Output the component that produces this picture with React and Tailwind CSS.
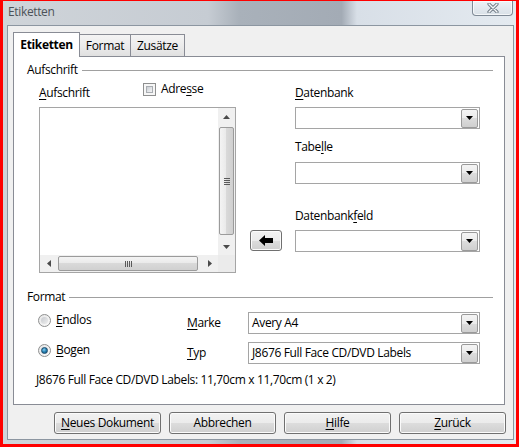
import React from "react";

const U = ({ children }) => (
  <span className="underline decoration-1 underline-offset-[2px]">{children}</span>
);

function DropBtn() {
  return (
    <div className="w-[17px] h-[19px] my-[1px] mr-[1px] border border-[#9a9a9a] rounded-[2px] bg-[linear-gradient(#f4f4f4_0%,#ebebeb_50%,#dcdcdc_50%,#cfcfcf_100%)] flex items-center justify-center shrink-0">
      <svg width="7" height="4" viewBox="0 0 7 4">
        <polygon points="0,0 7,0 3.5,4" fill="#000" />
      </svg>
    </div>
  );
}

function Combo({ className, value }) {
  return (
    <div className={"h-[22px] border border-[#a5a5a5] bg-white flex items-center " + className}>
      <span className="flex-1 pl-[3px] leading-[16px] whitespace-nowrap">{value}</span>
      <DropBtn />
    </div>
  );
}

function Checkbox() {
  return (
    <div className="w-[13px] h-[13px] border border-[#8e8f8f] bg-[#f6f6f6] p-[2px] shrink-0">
      <div className="w-full h-full border border-[#a9adb2] bg-[linear-gradient(135deg,#c9cdd2_0%,#e4e6e9_60%,#f4f4f4_100%)]" />
    </div>
  );
}

function Radio({ checked }) {
  return (
    <div className="w-[13px] h-[13px] rounded-full border border-[#8e8f8f] bg-[linear-gradient(135deg,#e6e6e6,#fbfbfb)] flex items-center justify-center shrink-0">
      {checked ? (
        <div className="w-[7px] h-[7px] rounded-full border border-[#1c4a6b] bg-[radial-gradient(circle_at_40%_35%,#8fd0f0_0%,#2a87b8_45%,#0d4a74_100%)]" />
      ) : (
        <div className="w-[7px] h-[7px] rounded-full bg-[linear-gradient(135deg,#c7cacf,#eeeeee)]" />
      )}
    </div>
  );
}

function Button({ children }) {
  return (
    <div className="h-[22px] w-[107px] rounded-[3px] border border-[#707070] bg-[linear-gradient(#f2f2f2_0%,#ebebeb_50%,#dddddd_50%,#cfcfcf_100%)] shadow-[inset_0_0_0_1px_#fbfbfb] flex items-center justify-center leading-[14px]">
      {children}
    </div>
  );
}

function Tri({ dir }) {
  const pts = {
    up: "0,4 7,4 3.5,0",
    down: "0,0 7,0 3.5,4",
    left: "4,0 4,7 0,3.5",
    right: "0,0 0,7 4,3.5",
  }[dir];
  const vertical = dir === "up" || dir === "down";
  return (
    <svg width={vertical ? 7 : 4} height={vertical ? 4 : 7} viewBox={vertical ? "0 0 7 4" : "0 0 4 7"}>
      <polygon points={pts} fill="#4a4a4a" />
    </svg>
  );
}

function Header({ label, className }) {
  return (
    <div className={"flex items-center h-[14px] pl-[13px] pr-[11px] " + className}>
      <span className="leading-[14px]">{label}</span>
      <div className="flex-1 h-px bg-[#a0a0a0] ml-[4px]" />
    </div>
  );
}

export default function App() {
  return (
    <div className="w-[519px] h-[447px] border-[#ff0000] border-l-[3px] border-r-[3px] border-t-[1px] border-b-[3px] font-['Open_Sans',sans-serif] text-[12px] tracking-[-0.35px] text-black overflow-hidden">
      <div className="w-full h-full bg-[linear-gradient(to_right,#cfd4d9_0%,#c6ccd3_40%,#a9b1ba_46%,#a3abb5_66%,#d8dfe7_69%,#e4eaf0_100%)] flex flex-col">
        {/* title bar */}
        <div className="h-[24px] flex items-start pl-[5px] pr-[3px] shrink-0">
          <span className="mt-[3px] leading-[16px] text-[#4c5258]">Etiketten</span>
          <div className="ml-auto w-[41px] h-[15px] rounded-b-[4px] border border-t-0 border-[#7f8a96] bg-[linear-gradient(#eef2f6,#d9e0e7)] shadow-[inset_0_0_0_1px_rgba(255,255,255,0.7)] flex items-center justify-center">
            <svg width="12" height="10" viewBox="0 0 12 10">
              <path d="M2 1 L10 9 M10 1 L2 9" stroke="#6e7984" strokeWidth="3.2" strokeLinecap="round" />
              <path d="M2 1 L10 9 M10 1 L2 9" stroke="#f4f6f8" strokeWidth="1.4" strokeLinecap="round" />
            </svg>
          </div>
        </div>

        {/* dialog body */}
        <div className="ml-[4px] w-[507px] h-[415px] border border-[#8c96a1] bg-[#f0f0f0] pl-[5px] pr-[7px] pt-[6px] flex flex-col">
          {/* tabs */}
          <div className="flex items-end h-[24px] relative z-10">
            <div className="w-[67px] h-[25px] -mb-[1px] border border-b-0 border-[#898c95] bg-white flex items-center justify-center font-bold">
              Etiketten
            </div>
            <div className="w-[51px] h-[22px] border-t border-r border-[#898c95] bg-[linear-gradient(#f4f4f4_0%,#ececec_50%,#e0e0e0_100%)] flex items-center justify-center">
              Format
            </div>
            <div className="w-[54px] h-[22px] border-t border-r border-[#898c95] bg-[linear-gradient(#f4f4f4_0%,#ececec_50%,#e0e0e0_100%)] flex items-center justify-center">
              Zusätze
            </div>
          </div>

          {/* panel */}
          <div className="w-[492px] h-[349px] border border-[#898c95] bg-white flex flex-col pt-[6px]">
            <Header label="Aufschrift" />

            <div className="flex items-start pl-[25px]">
              {/* left column */}
              <div className="w-[197px] flex flex-col">
                <div className="h-[30px] flex items-start">
                  <span className="w-[104px] mt-[9px] leading-[14px]">
                    <U>A</U>ufschrift
                  </span>
                  <div className="mt-[6px]">
                    <Checkbox />
                  </div>
                  <span className="ml-[5px] mt-[5px] leading-[14px]">
                    Adre<U>s</U>se
                  </span>
                </div>
                <div className="h-[166px] border border-[#a5a5a5] bg-white flex flex-col">
                  <div className="flex-1 flex">
                    <div className="flex-1" />
                    <div className="w-[17px] bg-[#f0f0f0] flex flex-col">
                      <div className="h-[17px] flex items-center justify-center">
                        <Tri dir="up" />
                      </div>
                      <div className="mt-[2px] mx-[1px] h-[108px] rounded-[2px] border border-[#9b9b9b] bg-[linear-gradient(to_right,#f4f4f4_0%,#e9e9e9_50%,#d9d9d9_50%,#d0d0d0_100%)] flex items-center justify-center">
                        <div className="flex flex-col gap-[1px]">
                          <div className="w-[6px] h-px bg-[#5a5a5a]" />
                          <div className="w-[6px] h-px bg-[#5a5a5a]" />
                          <div className="w-[6px] h-px bg-[#5a5a5a]" />
                          <div className="w-[6px] h-px bg-[#5a5a5a]" />
                        </div>
                      </div>
                      <div className="flex-1" />
                      <div className="h-[17px] flex items-center justify-center">
                        <Tri dir="down" />
                      </div>
                    </div>
                  </div>
                  <div className="h-[17px] flex">
                    <div className="flex-1 bg-[#f0f0f0] flex items-center">
                      <div className="w-[17px] h-full flex items-center justify-center">
                        <Tri dir="left" />
                      </div>
                      <div className="ml-[1px] w-[140px] h-[15px] rounded-[2px] border border-[#9b9b9b] bg-[linear-gradient(#f4f4f4_0%,#e9e9e9_50%,#d9d9d9_50%,#d0d0d0_100%)] flex items-center justify-center">
                        <div className="flex gap-[1px]">
                          <div className="w-px h-[6px] bg-[#5a5a5a]" />
                          <div className="w-px h-[6px] bg-[#5a5a5a]" />
                          <div className="w-px h-[6px] bg-[#5a5a5a]" />
                          <div className="w-px h-[6px] bg-[#5a5a5a]" />
                        </div>
                      </div>
                      <div className="flex-1" />
                      <div className="w-[17px] h-full flex items-center justify-center">
                        <Tri dir="right" />
                      </div>
                    </div>
                    <div className="w-[17px] bg-[#ebebeb]" />
                  </div>
                </div>
              </div>

              {/* arrow button */}
              <div className="ml-[14px] mt-[153px] w-[32px] h-[21px] rounded-[3px] border border-[#707070] bg-[linear-gradient(#f2f2f2_0%,#ebebeb_50%,#dddddd_50%,#cfcfcf_100%)] shadow-[inset_0_0_0_1px_#fbfbfb] flex items-center justify-center">
                <svg width="14" height="11" viewBox="0 0 14 11">
                  <polygon points="0,5.5 6,0 6,3 14,3 14,8 6,8 6,11" fill="#000" />
                </svg>
              </div>

              {/* right column */}
              <div className="ml-[13px] w-[185px] flex flex-col">
                <span className="mt-[9px] leading-[14px]">
                  <U>D</U>atenbank
                </span>
                <Combo className="mt-[7px]" value="" />
                <span className="mt-[11px] leading-[14px]">
                  Tabe<U>l</U>le
                </span>
                <Combo className="mt-[8px]" value="" />
                <span className="mt-[25px] leading-[14px]">
                  Datenbank<U>f</U>eld
                </span>
                <Combo className="mt-[7px]" value="" />
              </div>
            </div>

            <Header label="Format" className="mt-[17px]" />

            <div className="mt-[8px] h-[22px] flex items-start pl-[24px]">
              <div className="w-[149px] flex items-start">
                <div className="mt-[2px]">
                  <Radio />
                </div>
                <span className="ml-[5px] mt-[1px] leading-[14px]">
                  <U>E</U>ndlos
                </span>
              </div>
              <span className="w-[61px] mt-[4px] leading-[14px]">
                <U>M</U>arke
              </span>
              <Combo className="w-[232px]" value="Avery A4" />
            </div>

            <div className="mt-[8px] h-[22px] flex items-start pl-[24px]">
              <div className="w-[149px] flex items-start">
                <div className="mt-[2px]">
                  <Radio checked />
                </div>
                <span className="ml-[5px] mt-[1px] leading-[14px]">
                  <U>B</U>ogen
                </span>
              </div>
              <span className="w-[61px] mt-[4px] leading-[14px]">
                <U>T</U>yp
              </span>
              <Combo className="w-[232px]" value="J8676 Full Face CD/DVD Labels" />
            </div>

            <div className="mt-[9px] pl-[22px] leading-[14px] whitespace-nowrap">
              J8676 Full Face CD/DVD Labels: 11,70cm x 11,70cm (1 x 2)
            </div>
          </div>

          {/* buttons */}
          <div className="mt-[7px] flex justify-end gap-[8px]">
            <Button>
              <span>
                <U>N</U>eues Dokument
              </span>
            </Button>
            <Button>Abbrechen</Button>
            <Button>
              <span>
                <U>H</U>ilfe
              </span>
            </Button>
            <Button>
              <span>
                <U>Z</U>urück
              </span>
            </Button>
          </div>
        </div>
      </div>
    </div>
  );
}
